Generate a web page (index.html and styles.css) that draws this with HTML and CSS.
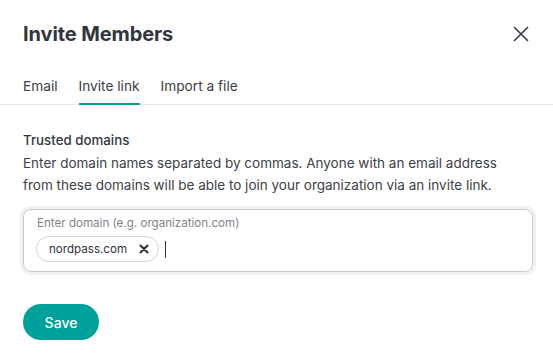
FILE: index.html
```
<!DOCTYPE html>
<html>
<head>
<meta charset="utf-8">
<link rel="stylesheet" href="styles.css">
</head>
<body>
<div class="modal">
  <header class="head">
    <h1 class="title">Invite Members</h1>
    <button class="close" aria-label="Close">
      <svg width="16" height="16" viewBox="0 0 16 16"><path d="M1.5 1.5L14.5 14.5M14.5 1.5L1.5 14.5" stroke="#3b3f46" stroke-width="1.7" stroke-linecap="round"/></svg>
    </button>
  </header>
  <nav class="tabs">
    <span class="tab">Email</span>
    <span class="tab active">Invite link</span>
    <span class="tab">Import a file</span>
  </nav>
  <section class="body">
    <h2 class="label">Trusted domains</h2>
    <p class="desc">Enter domain names separated by commas. Anyone with an email address from these domains will be able to join your organization via an invite link.</p>
    <div class="field">
      <div class="placeholder">Enter domain (e.g. organization.com)</div>
      <div class="chips">
        <span class="chip">nordpass.com
          <svg class="chip-x" width="10" height="10" viewBox="0 0 10 10"><path d="M1.5 1.5L8.5 8.5M8.5 1.5L1.5 8.5" stroke="#2f333a" stroke-width="2.1" stroke-linecap="round"/></svg>
        </span>
        <span class="caret"></span>
      </div>
    </div>
    <button class="save">Save</button>
  </section>
</div>
</body>
</html>
```
FILE: styles.css
```
* { box-sizing: border-box; }
html, body { margin: 0; padding: 0; background: #fff; }
body { font-family: Inter, "Noto Sans", sans-serif; color: #3a3e45; width: 553px; height: 356px; overflow: hidden; }
.modal { display: flex; flex-direction: column; }
.head { display: flex; justify-content: space-between; align-items: center; padding: 22px 24px 0 23px; height: 46px; }
.title { margin: 0; font-size: 20px; font-weight: 700; color: #31353c; letter-spacing: -0.1px; line-height: 24px; }
.close { border: 0; background: none; padding: 0; width: 16px; height: 16px; display: flex; }
.tabs { display: flex; gap: 21px; padding: 31px 23px 0; border-bottom: 1px solid #e8e9ec; }
.tab { font-size: 13.7px; line-height: 19px; color: #3a3e45; padding-bottom: 7px; border-bottom: 2px solid transparent; margin-bottom: -1px; }
.tab.active { border-bottom-color: #00a19a; }
.body { padding: 25px 23px 0; display: flex; flex-direction: column; align-items: flex-start; }
.label { margin: 0; font-size: 13.3px; font-weight: 500; line-height: 20px; color: #32363d; }
.desc { margin: 2px 0 0; max-width: 500px; font-size: 13.5px; line-height: 22px; color: #3d4148; }
.field { margin-top: 13px; width: 510px; height: 63px; border: 1px solid #c6c9ce; border-radius: 8px; box-shadow: 0 0 0 3px #eef0f3; padding: 5px 12px 0 12px; }
.placeholder { font-size: 11.6px; line-height: 16px; color: #80848b; padding-left: 1px; }
.chips { display: flex; align-items: center; gap: 6px; margin-top: 5px; }
.chip { display: inline-flex; align-items: center; gap: 12px; height: 26px; padding: 0 9px 0 12px; border: 1px solid #d3d5d9; border-radius: 13px; font-size: 11.6px; color: #2f333a; }
.caret { width: 1px; height: 17px; background: #2f333a; }
.save { margin-top: 32px; width: 76px; height: 36px; border: 0; border-radius: 18px; background: #00a19a; color: #fff; font-family: Inter, sans-serif; font-size: 14px; font-weight: 500; }
```
